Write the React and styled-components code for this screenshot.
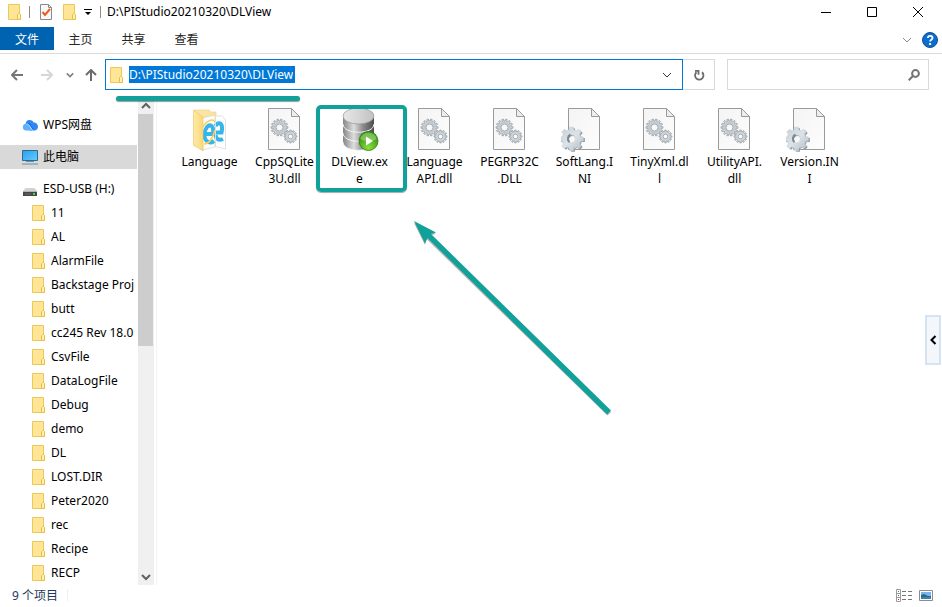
import React, { useState } from 'react';
import styled, { createGlobalStyle } from 'styled-components';

const GlobalStyle = createGlobalStyle`
    * {
        box-sizing: border-box;
    }

    body {
        margin: 0;
        background-color: #ffffff;
        color: #000000;
        font-family: "Noto Sans", "Noto Sans CJK SC", sans-serif;
        font-size: 12px;
        line-height: 17px;
    }

    button, input {
        margin: 0;
        padding: 0;
        border: none;
        background: none;
        font: inherit;
        color: inherit;
        outline: none;
    }

    svg {
        display: block;
        flex-shrink: 0;
    }
`;

const Window = styled.div`
    display: flex;
    flex-direction: column;
    min-height: 100vh;
`;

const TitleBar = styled.header`
    display: flex;
    align-items: center;
    height: 27px;
    padding: 0 1px 4px 7px;
`;

const QuickAccess = styled.div`
    display: flex;
    align-items: center;
    gap: 8px;
    margin-right: 6px;
`;

const Divider = styled.span`
    width: 1px;
    height: 12px;
    background-color: ${(props) => props.$color || '#8c8c8c'};
`;

const Title = styled.h1`
    flex: 1;
    margin: 0;
    font-size: 12px;
    font-weight: normal;
`;

const IconButton = styled.button`
    display: flex;
    align-items: center;
    justify-content: center;
    width: ${(props) => props.$width}px;
    height: 23px;
`;

const Ribbon = styled.nav`
    display: flex;
    align-items: center;
    height: 27px;
    padding: 0 3px 3px 0;
    border-bottom: 1px solid #dadbdc;

    ${IconButton} {
        padding-top: 2px;
    }
`;

const Tab = styled.button`
    width: 53px;
    height: 23px;
    padding-top: 2px;
    color: #262626;
`;

const FileTab = styled(Tab)`
    width: 54px;
    background-color: #0063b1;
    color: #ffffff;
`;

const Spacer = styled.div`
    flex: 1;
`;

const NavRow = styled.div`
    display: flex;
    align-items: center;
    height: 43px;
    padding: 0 13px 2px 3px;
`;

const AddressBox = styled.div`
    position: relative;
    display: flex;
    flex: 1;
    align-items: center;
    height: 31px;
    padding: 0 4px 0 3px;
    border: 1px solid #0078d7;
`;

const AddressInput = styled.input`
    field-sizing: content;
    height: 17px;
    margin-left: 6px;
    padding: 0 2px 0 0;
    background-color: #0078d7;
    color: #ffffff;
`;

const Underline = styled.span`
    position: absolute;
    left: 10px;
    top: 36px;
    width: 184px;
    height: 5px;
    border-radius: 3px;
    background-color: #12a19a;
    box-shadow: 0 1px 1px rgba(0, 0, 0, 0.4);
    z-index: 1;
`;

const RefreshButton = styled.button`
    display: flex;
    align-items: center;
    justify-content: center;
    width: 32px;
    height: 31px;
    border: 1px solid #d9d9d9;
    border-left: none;
`;

const SearchBox = styled.label`
    display: flex;
    align-items: center;
    width: 202px;
    height: 31px;
    margin-left: 12px;
    padding: 0 8px;
    border: 1px solid #d9d9d9;
`;

const SearchInput = styled.input`
    flex: 1;
    min-width: 0;
`;

const Body = styled.div`
    display: flex;
    flex: 1;
`;

const Sidebar = styled.aside`
    display: flex;
    width: 157px;
    border-right: 1px solid #f3f3f3;
`;

const Tree = styled.div`
    flex: 1;
    min-width: 0;
    padding-top: 16px;
`;

const TreeItem = styled.button`
    display: flex;
    align-items: center;
    gap: ${(props) => (props.$child ? 6 : 5)}px;
    width: 137px;
    height: 24px;
    margin-bottom: ${(props) => (props.$spaced ? 8 : 0)}px;
    padding-left: ${(props) => (props.$child ? 31 : 22)}px;
    background-color: ${(props) => (props.$active ? '#d9d9d9' : 'transparent')};
    white-space: nowrap;
`;

const TreeLabel = styled.span`
    padding-bottom: 2px;
`;

const ScrollBar = styled.div`
    display: flex;
    flex-direction: column;
    width: 16px;
    margin-right: 2px;
    background-color: #f0f0f0;
`;

const ScrollButton = styled.button`
    display: flex;
    align-items: center;
    justify-content: center;
    width: 15px;
    height: 17px;
`;

const ScrollThumb = styled.div`
    height: 232px;
    margin-right: 1px;
    margin-bottom: auto;
    background-color: #cdcdcd;
`;

const FilePane = styled.main`
    position: relative;
    flex: 1;
    min-width: 0;
    padding: 9px 0 0 15px;
`;

const FileGrid = styled.div`
    display: flex;
    flex-wrap: wrap;
`;

const File = styled.button`
    position: relative;
    display: flex;
    flex-direction: column;
    align-items: center;
    width: 75px;
    height: 84px;
`;

const FileName = styled.span`
    white-space: pre;
    text-align: center;
`;

const Highlight = styled.span`
    position: absolute;
    left: -6px;
    top: -1px;
    width: 91px;
    height: 87px;
    border: 4px solid #12a19a;
    border-radius: 5px;
    box-shadow: 0 1px 1px rgba(0, 0, 0, 0.35);
    z-index: 1;
`;

const Arrow = styled.svg`
    position: absolute;
    left: 253px;
    top: 120px;
`;

const PreviewToggle = styled.button`
    position: absolute;
    right: 1px;
    top: 218px;
    display: flex;
    align-items: center;
    justify-content: center;
    width: 16px;
    height: 50px;
    border: 2px solid #d5e3f4;
    background-color: #f3f7fc;
`;

const StatusBar = styled.footer`
    display: flex;
    align-items: center;
    gap: 9px;
    height: 22px;
    padding: 0 8px 2px 12px;
    color: #1e395b;
`;

const ViewButtons = styled.div`
    display: flex;
    align-items: center;
    gap: 5px;
    margin-left: auto;
`;

// Builds the outline of a cog with a round hole
const gearPath = (cx, cy, outer, inner, hole, teeth) => {
    const step = (Math.PI * 2) / teeth;
    const points = [];
    for (let i = 0; i < teeth; i++) {
        [[-0.3, inner], [-0.2, outer], [0.2, outer], [0.3, inner]].forEach(([t, r]) => {
            const a = (i + t) * step;
            points.push(`${(cx + r * Math.cos(a)).toFixed(2)} ${(cy + r * Math.sin(a)).toFixed(2)}`);
        });
    }
    return `M${points.join('L')}Z M${cx - hole} ${cy}a${hole} ${hole} 0 1 0 ${hole * 2} 0a${hole} ${hole} 0 1 0 ${-hole * 2} 0Z`;
};

const FolderIcon = () => (
    <svg width="14" height="18" viewBox="0 0 14 18">
        <path d="M1.500 1.500h11v9l1 1v5h-12z" fill="#ffe596" stroke="#edc757" />
        <path d="M10.500 16.500v-5l1-1h1l1 1v5z" fill="#fff0b3" stroke="#e6bd45" />
    </svg>
);

const Chevron = ({ d, color = '#606060', size = 10, width = 1 }) => (
    <svg width={size} height={size} viewBox="0 0 10 10" fill="none" stroke={color} strokeWidth={width}>
        <path d={d} />
    </svg>
);

const DOWN = 'M1 3l4 4 4-4';
const UP = 'M1 7l4-4 4 4';
const LEFT = 'M7.5 1l-4 4 4 4';

const CheckDocIcon = () => (
    <svg width="14" height="18" viewBox="0 0 14 18">
        <path d="M1.500 1.500h8l3 3v12h-11z" fill="#f8f8f8" stroke="#8a8a8a" />
        <path d="M9.500 1.500v3h3" fill="none" stroke="#8a8a8a" />
        <path d="M3.500 9l2.500 3 5-6" fill="none" stroke="#f0591a" strokeWidth="2" />
    </svg>
);

const CloudIcon = () => (
    <svg width="16" height="12" viewBox="0 0 16 12">
        <path d="M3.600 4.600a4.300 4.300 0 0 1 8.200-1c2.500 0 4.200 1.800 4.200 4.200 0 2-1.500 3.700-3.500 3.700z" fill="#2f86f6" />
        <path d="M4 4.500c1.500-.8 3.500-.3 4.500 1.200l3.800 5.800H8z" fill="#1166e0" />
        <path d="M3.800 4.800c1.700 0 2.600.7 3.500 2l3 4.700H3.500A3.400 3.400 0 0 1 3.800 4.800z" fill="#5eb0ff" />
        <path d="M4.500 4.800c1.500.2 2.400 1 3.200 2.200l3 4.500" fill="none" stroke="#ffffff" strokeWidth=".8" />
    </svg>
);

const ComputerIcon = () => (
    <svg width="16" height="16" viewBox="0 0 16 16">
        <defs>
            <linearGradient id="screen" x1="0" y1="0" x2="1" y2="1">
                <stop offset="0" stopColor="#2ca0ec" />
                <stop offset="1" stopColor="#65ccff" />
            </linearGradient>
        </defs>
        <path d="M.5 1.500h15v10H.5z" fill="url(#screen)" stroke="#2b6c94" />
        <path d="M4 12.500h8M0 15h16" stroke="#6d8da6" />
    </svg>
);

const DriveIcon = () => (
    <svg width="16" height="16" viewBox="0 0 16 16">
        <path d="M3.500 7h9L15 10H1z" fill="#d3d3d3" />
        <path d="M1 10h14v5H1z" fill="#474747" />
        <path d="M1 10.500h14" stroke="#b4b4b4" />
        <path d="M11 12h2v2h-2z" fill="#35e04a" />
        <path d="M3 13h6" stroke="#6f6f6f" />
    </svg>
);

const Sheet = () => (
    <g>
        <path d="M7.500 2.500h23l8 8v33h-31z" fill="url(#paper)" stroke="#9a9a9a" />
        <path d="M30.500 2.500v8h8z" fill="#ededed" stroke="#9a9a9a" />
    </g>
);

const DllIcon = () => (
    <svg width="47" height="47" viewBox="0 0 47 47">
        <Sheet />
        <g fill="#cfd6db" stroke="#999fa4" strokeWidth=".8" fillRule="evenodd">
            <path d={gearPath(18.5, 21.5, 8.5, 6.5, 3.5, 14)} />
            <path d={gearPath(29.5, 30.5, 6.5, 4.8, 2.3, 12)} />
        </g>
        <circle cx="18.500" cy="21.500" r="4.800" fill="none" stroke="#b7bfc5" />
    </svg>
);

const IniIcon = () => (
    <svg width="47" height="47" viewBox="0 0 47 47">
        <Sheet />
        <path d={gearPath(12, 34, 12, 9, 4, 8)} fill="#929ba3" fillRule="evenodd" />
        <path d={gearPath(10.5, 33, 12, 9.5, 4, 8)} fill="url(#steel)" stroke="#c1cad1" strokeWidth=".6" fillRule="evenodd" />
        <path d="M8.500 36c-2.500-2-2-6 1-7.500" fill="none" stroke="#7d8890" strokeWidth="2" />
    </svg>
);

const LanguageIcon = () => (
    <svg width="47" height="47" viewBox="0 0 47 47">
        <path d="M8 4h15l2 2h5v34H8z" fill="#fbe3a0" stroke="#efd188" strokeWidth=".6" />
        <path d="M27 10h9l3.500 4v29L27 40z" fill="#ffffff" stroke="#cfcfcf" strokeWidth=".6" />
        <path d="M16 12l13-3v32l-12 3z" fill="#fcfcfc" stroke="#cfcfcf" strokeWidth=".6" />
        <g fill="none" stroke="#35b5ea" strokeWidth="4">
            <path d="M28 35c-5 3.500-10 0-9.500-7 .5-6 4-10 7-8 2 1.500 2 4.500 1.500 8h-7.500" />
            <path d="M37 33c-4 2-7 0-7.500-4M29.500 20c2-4 6-3.500 6.500 1 .2 2 0 3.500-.5 5.500h-6" />
        </g>
        <path d="M16 22c5-8 11-10 13-6M18 38c5 0 9-7 11-14" fill="none" stroke="#ffcf55" strokeWidth="1.500" />
        <path d="M29.500 9v32" stroke="#dddddd" />
        <path d="M7.500 4.500L17 11v34l-9.500-6z" fill="url(#folder)" stroke="#e8c76a" strokeWidth=".6" />
    </svg>
);

const DatabaseIcon = () => (
    <svg width="47" height="47" viewBox="0 0 47 47">
        {[31, 22, 13].map((y) => (
            <g key={y}>
                <path d={`M7 ${y - 2}v7c0 11 31 11 31 0v-7z`} fill="url(#metal)" />
                <path d={`M7 ${y + 5}c0 11 31 11 31 0`} fill="none" stroke="#f4f4f4" strokeWidth="1" />
            </g>
        ))}
        <ellipse cx="22.500" cy="10" rx="15.500" ry="8" fill="url(#lid)" stroke="#979797" strokeWidth=".7" />
        <circle cx="32.500" cy="35" r="9.500" fill="url(#green)" stroke="#2c7c12" strokeWidth=".8" />
        <path d="M24.500 33a8 6.500 0 0 1 16 0c-5 3-11 3-16 0z" fill="#b5e88e" opacity=".5" />
        <path d="M30 30.500v9l7-4.500z" fill="#ffffff" />
    </svg>
);

// Gradients shared by the large file icons
const DefsSvg = styled.svg`
    position: absolute;
`;

const IconDefs = () => (
    <DefsSvg width="0" height="0">
        <defs>
            <linearGradient id="paper" x1="0" y1="0" x2="1" y2="1">
                <stop offset="0" stopColor="#f4f4f4" />
                <stop offset="1" stopColor="#fdfdfd" />
            </linearGradient>
            <linearGradient id="steel" x1="0" y1="0" x2="1" y2="1">
                <stop offset="0" stopColor="#c6d0d8" />
                <stop offset=".5" stopColor="#dce3e8" />
                <stop offset="1" stopColor="#b4bec6" />
            </linearGradient>
            <linearGradient id="folder" x1="0" y1="0" x2="1" y2="0">
                <stop offset="0" stopColor="#ffe9a6" />
                <stop offset="1" stopColor="#fbd977" />
            </linearGradient>
            <linearGradient id="metal" x1="0" y1="0" x2="1" y2="0">
                <stop offset="0" stopColor="#858585" />
                <stop offset=".35" stopColor="#dedede" />
                <stop offset=".65" stopColor="#8a8a8a" />
                <stop offset="1" stopColor="#4c4c4c" />
            </linearGradient>
            <linearGradient id="lid" x1="0" y1="0" x2="1" y2="0">
                <stop offset="0" stopColor="#e8e8e8" />
                <stop offset="1" stopColor="#c2c2c2" />
            </linearGradient>
            <radialGradient id="green" cx=".5" cy=".85" r=".8">
                <stop offset="0" stopColor="#8be03a" />
                <stop offset="1" stopColor="#2b8a14" />
            </radialGradient>
        </defs>
    </DefsSvg>
);

const folders = [
    '11', 'AL', 'AlarmFile', 'Backstage Proj', 'butt', 'cc245 Rev 18.0', 'CsvFile', 'DataLogFile',
    'Debug', 'demo', 'DL', 'LOST.DIR', 'Peter2020', 'rec', 'Recipe', 'RECP',
];

const files = [
    { name: 'Language', Icon: LanguageIcon },
    { name: 'CppSQLite\n3U.dll', Icon: DllIcon },
    { name: 'DLView.ex\ne', Icon: DatabaseIcon, marked: true },
    { name: 'Language\nAPI.dll', Icon: DllIcon },
    { name: 'PEGRP32C\n.DLL', Icon: DllIcon },
    { name: 'SoftLang.I\nNI', Icon: IniIcon },
    { name: 'TinyXml.dl\nl', Icon: DllIcon },
    { name: 'UtilityAPI.\ndll', Icon: DllIcon },
    { name: 'Version.IN\nI', Icon: IniIcon },
];

function App() {
    const [path, setPath] = useState('D:\\PIStudio20210320\\DLView');
    const [search, setSearch] = useState('');

    return (
        <Window>
            <GlobalStyle />
            <IconDefs />
            <TitleBar>
                <QuickAccess>
                    <FolderIcon />
                    <Divider />
                    <IconButton $width={16} aria-label="Properties"><CheckDocIcon /></IconButton>
                    <FolderIcon />
                    <IconButton $width={8} aria-label="Customize toolbar">
                        <svg width="8" height="8" viewBox="0 0 8 8">
                            <path d="M0 1h8v1H0zM1 4h6L4 7z" />
                        </svg>
                    </IconButton>
                    <Divider />
                </QuickAccess>
                <Title>{path}</Title>
                <IconButton $width={46} aria-label="Minimize">
                    <svg width="10" height="10"><path d="M0 5.500h10" stroke="#000000" /></svg>
                </IconButton>
                <IconButton $width={46} aria-label="Maximize">
                    <svg width="10" height="10"><path d="M.5.5h9v9h-9z" fill="none" stroke="#000000" /></svg>
                </IconButton>
                <IconButton $width={46} aria-label="Close">
                    <svg width="10" height="10"><path d="M0 0l10 10M10 0L0 10" stroke="#000000" /></svg>
                </IconButton>
            </TitleBar>
            <Ribbon>
                <FileTab>文件</FileTab>
                <Tab>主页</Tab>
                <Tab>共享</Tab>
                <Tab>查看</Tab>
                <Spacer />
                <IconButton $width={28} aria-label="Expand ribbon"><Chevron d={DOWN} color="#8a8a8a" /></IconButton>
                <IconButton $width={18} aria-label="Help">
                    <svg width="16" height="16" viewBox="0 0 16 16">
                        <circle cx="8" cy="8" r="7.500" fill="#0a6ed1" stroke="#174e86" />
                        <path d="M5.800 6c0-3 4.700-2.800 4.700 0 0 1.800-2.400 1.800-2.400 3.600" fill="none" stroke="#ffffff" strokeWidth="1.800" />
                        <path d="M7.100 11h2v2h-2z" fill="#ffffff" />
                    </svg>
                </IconButton>
            </Ribbon>
            <NavRow>
                <IconButton $width={28} aria-label="Back">
                    <svg width="12" height="12" fill="none" stroke="#767676" strokeWidth="2"><path d="M12 6H1M6 1L1 6l5 5" /></svg>
                </IconButton>
                <IconButton $width={32} aria-label="Forward">
                    <svg width="12" height="12" fill="none" stroke="#d6d6d6" strokeWidth="2"><path d="M0 6h11M6 1l5 5-5 5" /></svg>
                </IconButton>
                <IconButton $width={14} aria-label="Recent locations"><Chevron d={DOWN} size={8} width={2} color="#808080" /></IconButton>
                <IconButton $width={28} aria-label="Up">
                    <svg width="12" height="12" fill="none" stroke="#6b6b6b" strokeWidth="2"><path d="M6 12V1M1 6l5-5 5 5" /></svg>
                </IconButton>
                <AddressBox>
                    <FolderIcon />
                    <AddressInput aria-label="Address" value={path} onChange={(e) => setPath(e.target.value)} />
                    <Spacer />
                    <IconButton $width={22} aria-label="Previous locations"><Chevron d={DOWN} color="#333333" /></IconButton>
                    <Underline />
                </AddressBox>
                <RefreshButton aria-label="Refresh">
                    <svg width="12" height="12" viewBox="0 0 12 12" fill="none" stroke="#6b6b6b" strokeWidth="1.800">
                        <path d="M9 3.200A4.200 4.200 0 1 1 3.500 3.200M2 1.800h3.500v4" />
                    </svg>
                </RefreshButton>
                <SearchBox>
                    <SearchInput aria-label="Search" value={search} onChange={(e) => setSearch(e.target.value)} />
                    <svg width="12" height="12" viewBox="0 0 12 12" fill="none" stroke="#747474" strokeWidth="2">
                        <circle cx="7.500" cy="4.500" r="3.400" />
                        <path d="M5 7L.7 11.300" />
                    </svg>
                </SearchBox>
            </NavRow>
            <Body>
                <Sidebar>
                    <Tree>
                        <TreeItem $spaced><CloudIcon /><TreeLabel>WPS网盘</TreeLabel></TreeItem>
                        <TreeItem $spaced $active><ComputerIcon /><TreeLabel>此电脑</TreeLabel></TreeItem>
                        <TreeItem><DriveIcon /><TreeLabel>ESD-USB (H:)</TreeLabel></TreeItem>
                        {folders.map((name) => (
                            <TreeItem key={name} $child><FolderIcon /><TreeLabel>{name}</TreeLabel></TreeItem>
                        ))}
                    </Tree>
                    <ScrollBar>
                        <ScrollButton aria-label="Scroll up"><Chevron d={UP} width={2} /></ScrollButton>
                        <ScrollThumb />
                        <ScrollButton aria-label="Scroll down"><Chevron d={DOWN} width={2} /></ScrollButton>
                    </ScrollBar>
                </Sidebar>
                <FilePane>
                    <FileGrid>
                        {files.map(({ name, Icon, marked }) => (
                            <File key={name}>
                                <Icon />
                                <FileName>{name}</FileName>
                                {marked && <Highlight />}
                            </File>
                        ))}
                    </FileGrid>
                    <Arrow width="206" height="204" viewBox="0 0 206 204">
                        <g transform="translate(0 1)" fill="#000000" opacity=".3">
                            <path d="M4 5l22 11-6 1.500L201 194l-3.500 3.500L16.500 21 15 27z" />
                        </g>
                        <path d="M4 4l22 11.500-5 1.500L201 193.500l-4 4L17.500 21 15 26.500z" fill="#12a19a" />
                    </Arrow>
                    <PreviewToggle aria-label="Show preview"><Chevron d={LEFT} color="#000000" width={2} /></PreviewToggle>
                </FilePane>
            </Body>
            <StatusBar>
                <span>9 个项目</span>
                <Divider $color="#efefef" />
                <ViewButtons>
                    <IconButton $width={18} aria-label="Details">
                        <svg width="16" height="13" viewBox="0 0 16 13">
                            <path d="M.5.5h4v12h-4zM.5 4.500h4M.5 8.500h4" fill="#ffffff" stroke="#9a9a9a" />
                            <path d="M6 2.500h4M12 2.500h4M6 6.500h4M12 6.500h4M6 10.500h4M12 10.500h4" stroke="#777777" />
                            <path d="M2 2h1v1H2z" fill="#3f8f5a" />
                            <path d="M2 6h1v1H2z" fill="#2a6ee0" />
                            <path d="M2 10h1v1H2z" fill="#e02020" />
                        </svg>
                    </IconButton>
                    <IconButton $width={16} aria-label="Large icons">
                        <svg width="14" height="11" viewBox="0 0 14 11">
                            <path d="M.5.5h13v10H.5z" fill="#ffffff" stroke="#8c8c8c" />
                            <path d="M2 2h10v4H2z" fill="#78b4ee" />
                            <path d="M2 5l3-1 4 2h3v3H2z" fill="#2d6a78" />
                            <path d="M2 7h10v2H2z" fill="#3e7ebd" />
                        </svg>
                    </IconButton>
                </ViewButtons>
            </StatusBar>
        </Window>
    );
}

export default App;
